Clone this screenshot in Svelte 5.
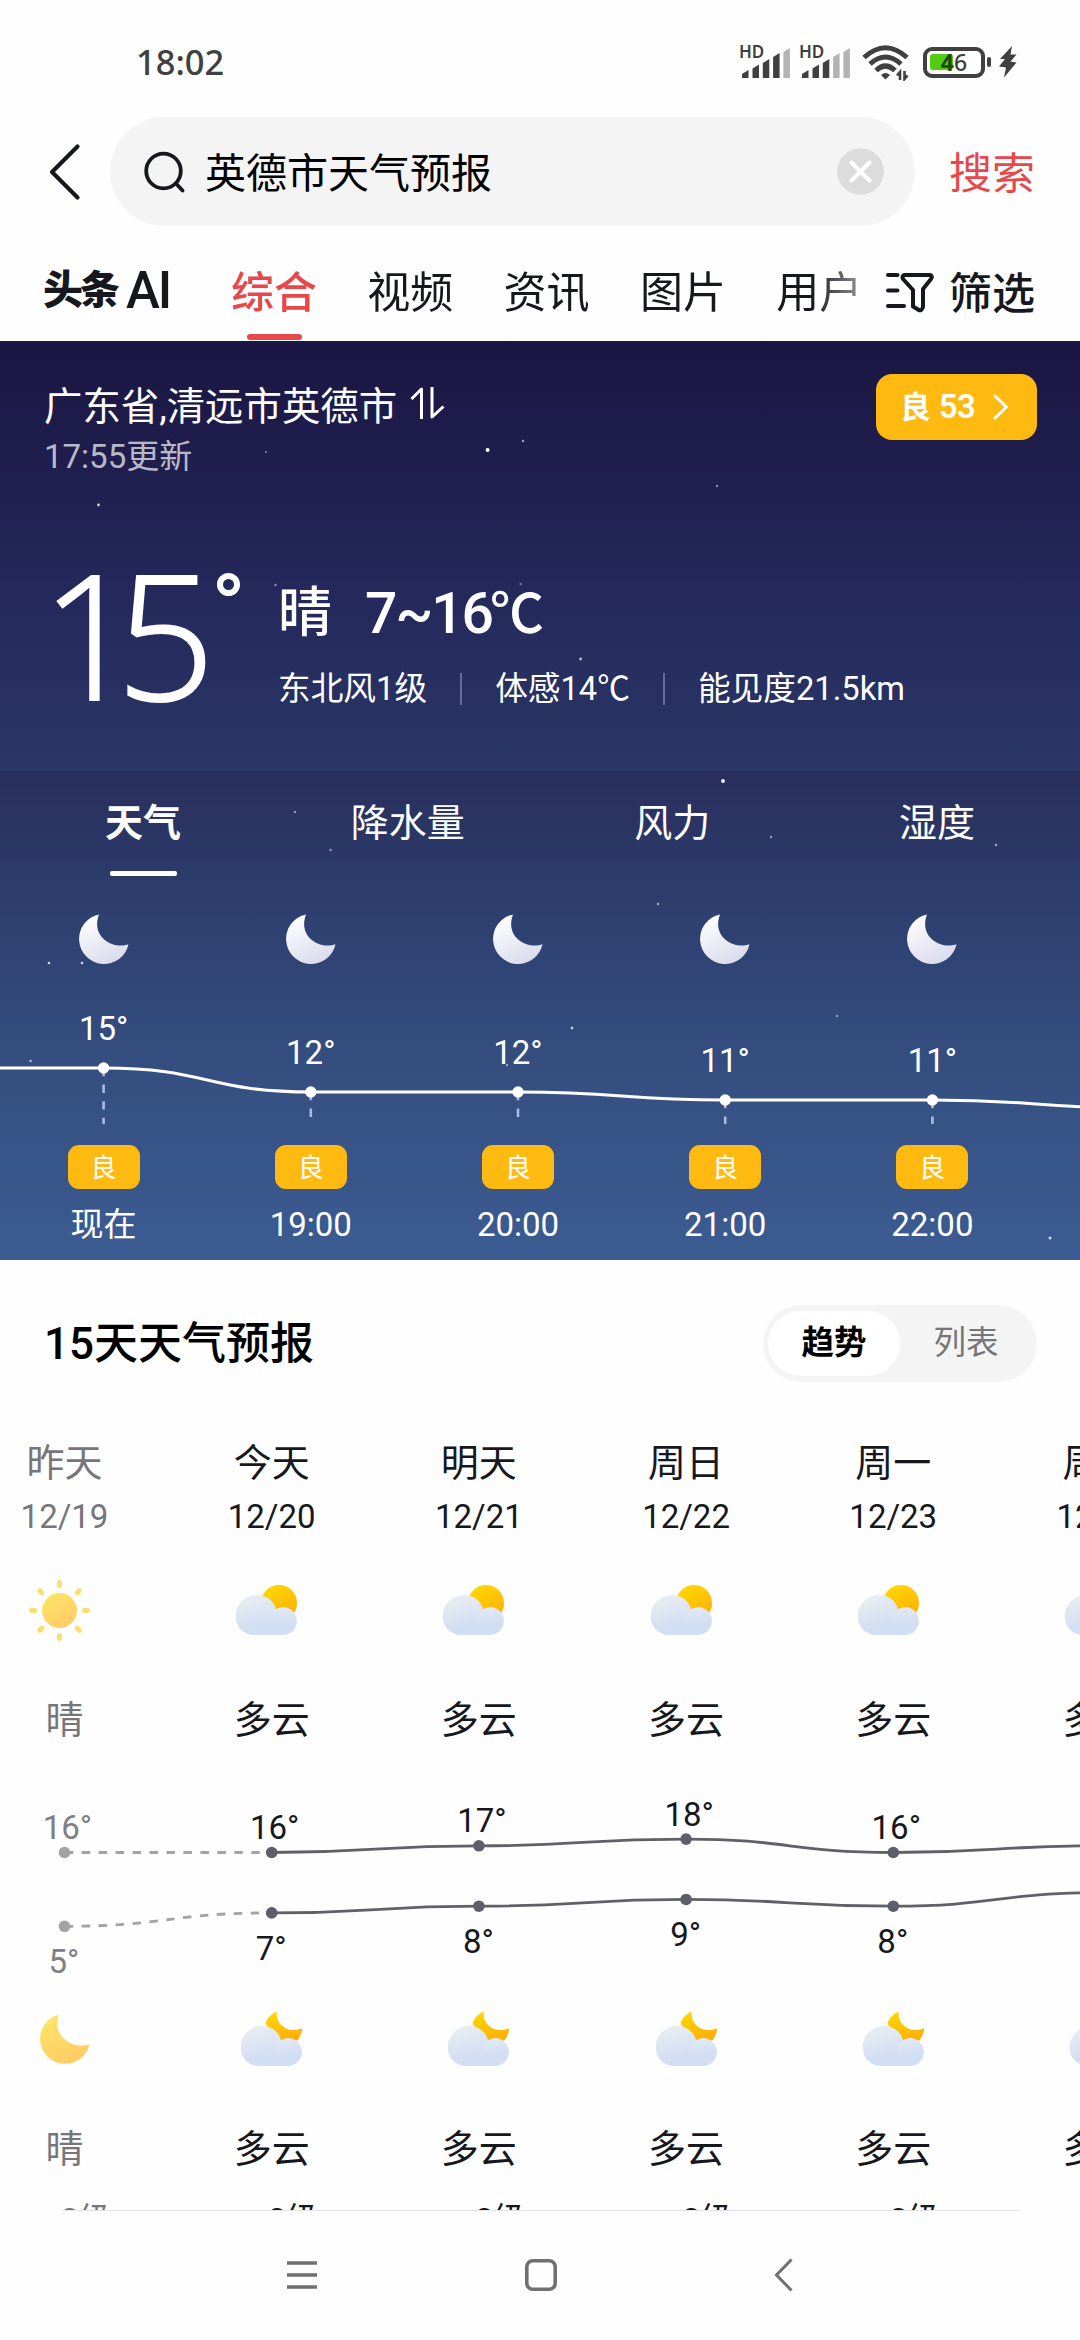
<script>
  const tabs = ['综合', '视频', '资讯', '图片', '用户'];
  const metrics = ['天气', '降水量', '风力', '湿度'];
  let activeTab = '综合';
  let activeMetric = '天气';
  let view = '趋势';

  const COL = 207.2;

  const hours = [
    { time: '现在', temp: 15, air: '良' },
    { time: '19:00', temp: 12, air: '良' },
    { time: '20:00', temp: 12, air: '良' },
    { time: '21:00', temp: 11, air: '良' },
    { time: '22:00', temp: 11, air: '良' },
  ];

  const days = [
    { name: '昨天', date: '12/19', high: 16, low: 5, sky: '晴', past: true },
    { name: '今天', date: '12/20', high: 16, low: 7, sky: '多云' },
    { name: '明天', date: '12/21', high: 17, low: 8, sky: '多云' },
    { name: '周日', date: '12/22', high: 18, low: 9, sky: '多云' },
    { name: '周一', date: '12/23', high: 16, low: 8, sky: '多云' },
    { name: '周二', date: '12/24', high: 17, low: 10, sky: '多云' },
  ];

  // x, y, radius, opacity
  const stars = [
    [487.6, 109, 2, 1], [266, 111, 1, 0.5], [523, 100, 1.2, 0.6], [717, 145, 1.2, 0.5],
    [98.5, 164, 1.4, 0.8], [275.5, 244, 1.2, 0.5], [520.6, 243, 1.2, 0.4], [580.6, 318, 1.4, 0.7],
    [723, 440, 2, 0.9], [295, 471, 1.2, 0.5], [330.6, 509, 1.2, 0.5], [771, 496, 1.2, 0.5],
    [996, 504, 1.2, 0.6], [658, 563, 1.2, 0.6], [49, 622, 1.3, 0.8], [82, 622, 1.3, 0.8],
    [837, 675, 1.2, 0.5], [572, 687, 1.4, 0.7], [30.5, 720, 1.3, 0.6], [507, 724, 1.2, 0.5],
    [1050, 897, 1.5, 0.8],
  ];

  // Smooth line with flat tangents on every point
  const smooth = (pts) =>
    pts.reduce((d, [x, y], i) => {
      if (!i) return `M${x} ${y}`;
      const [px, py] = pts[i - 1];
      const mid = (px + x) / 2;
      return `${d}C${mid} ${py} ${mid} ${y} ${x} ${y}`;
    }, '');

  const hourX = (i) => 103.6 + i * COL;
  const hourY = (t) => 104 + (15 - t) * 8;
  const hourLine = smooth([
    [-103.6, hourY(15)],
    ...hours.map((h, i) => [hourX(i), hourY(h.temp)]),
    [hourX(5), hourY(10)],
  ]);

  const dayX = (i) => 64.5 + i * COL;
  const dayY = (t) => 92.5 - (t - 16) * 6.71;
  const highs = days.map((d, i) => [dayX(i), dayY(d.high)]);
  const lows = days.map((d, i) => [dayX(i), dayY(d.low)]);
</script>

{#snippet cloud()}
  <path d="M20 50C8.500 50 0.800 42 0.800 31.500C0.800 19.500 10 10 22 10C31.500 10 38.500 15.500 41 24L50 50Z" fill="url(#cloud)" />
  <path d="M18 50H48.500A13.600 14 0 1 0 35 33C33 40 30 46 18 50Z" fill="url(#puff)" />
{/snippet}

<svg class="defs" width="0" height="0" aria-hidden="true">
  <defs>
    <linearGradient id="silver" x1="0.2" y1="0" x2="0.7" y2="1">
      <stop offset="0" stop-color="#ffffff" />
      <stop offset="1" stop-color="#d9daec" />
    </linearGradient>
    <linearGradient id="gold" x1="0.2" y1="0" x2="0.7" y2="1">
      <stop offset="0" stop-color="#ffe566" />
      <stop offset="1" stop-color="#ffcb66" />
    </linearGradient>
    <linearGradient id="amber" x1="0.2" y1="0" x2="0.7" y2="1">
      <stop offset="0" stop-color="#ffd800" />
      <stop offset="1" stop-color="#ffae08" />
    </linearGradient>
    <linearGradient id="cloud" x1="0.3" y1="0" x2="0.6" y2="1">
      <stop offset="0" stop-color="#e9eef3" />
      <stop offset="0.75" stop-color="#d2def2" />
    </linearGradient>
    <linearGradient id="puff" x1="0.55" y1="0" x2="0.75" y2="1">
      <stop offset="0" stop-color="#e2eaf7" />
      <stop offset="0.6" stop-color="#d2def2" />
    </linearGradient>
  </defs>
</svg>

<main class="screen">
  <!-- System status bar -->
  <header class="status">
    <span class="clock">18:02</span>
    <div class="indicators">
      {#each [4, 3] as level}
        <div class="signal">
          <span class="hd">HD</span>
          <svg width="50" height="34" viewBox="0 0 50 34" fill="#404040">
            <path d="M1 33V29L7.500 25V33Z" />
            {#each [19.5, 14, 8, 3] as top, i}
              <path d="M{11.5 + i * 10.3} 33V{top + 4}L{18 + i * 10.3} {top}V33Z" fill={i + 2 > level ? '#b3b3b3' : '#404040'} />
            {/each}
          </svg>
        </div>
      {/each}
      <svg class="wifi" width="48" height="36" viewBox="0 0 48 36" fill="none" stroke="#404040" stroke-width="5">
        <path d="M2 12.500Q23.500 -7 45 12.500" />
        <path d="M8 19Q23.500 5 39 19" />
        <path d="M14 25.500Q23.500 16.500 33 25.500" />
        <path d="M19 30Q23.500 26 28 30L23.500 34.500Z" fill="#404040" stroke="none" />
        <path d="M38 35V27L35 30.500M42.500 26V34L45.500 30.500" stroke-width="2.600" />
      </svg>
      <div class="battery"><i></i><b>4</b><span>6</span></div>
      <i class="nub"></i>
      <svg width="18" height="32" viewBox="0 0 18 32" fill="#404040">
        <path d="M13 0L1 13H6L0 20.500L7 21.500L5 31.500L17.500 16.500L11.500 15.500L17.500 8.500H11.500Z" />
      </svg>
    </div>
  </header>

  <!-- Search -->
  <div class="search-row">
    <svg class="back" width="34" height="60" viewBox="0 0 34 60" fill="none" stroke="#16181d" stroke-width="4.200" stroke-linecap="round" stroke-linejoin="round">
      <path d="M30.500 4.500L5 30L30.500 55.500" />
    </svg>
    <div class="search-box">
      <svg width="42" height="42" viewBox="0 0 42 42" fill="none" stroke="#16181d" stroke-width="3.800" stroke-linecap="round">
        <circle cx="19.500" cy="20" r="17.300" />
        <path d="M32 32.500L38.500 39.500" />
      </svg>
      <span class="query">英德市天气预报</span>
      <svg class="clear" width="47" height="47" viewBox="0 0 47 47">
        <circle cx="23.500" cy="23.500" r="23.300" fill="#dcdcdc" />
        <path d="M14.500 14.500L32.500 32.500M32.500 14.500L14.500 32.500" stroke="#fff" stroke-width="4" stroke-linecap="round" />
      </svg>
    </div>
    <span class="search-btn">搜索</span>
  </div>

  <!-- Result tabs -->
  <nav class="tabs">
    <span class="brand">头条<em>AI</em></span>
    <div class="tab-list">
      {#each tabs as tab}
        <span class="tab" class:active={tab === activeTab}>{tab}</span>
      {/each}
    </div>
    <svg class="filter-icon" width="50" height="42" viewBox="0 0 50 42" fill="none" stroke="#16181d" stroke-width="4" stroke-linecap="round" stroke-linejoin="round">
      <path d="M3 4H12.500M3 19.500H12.500M3 35H19" />
      <path d="M19.500 4H45Q48 5 46 8L38 18V36Q36.500 41 33 38.500L28 35.500V19L18 8Q16.500 5 19.500 4Z" />
    </svg>
    <span class="filter">筛选</span>
  </nav>

  <!-- Current weather -->
  <section class="hero">
    <svg class="stars" width="1080" height="919" fill="#fff">
      {#each stars as [x, y, r, o]}
        <circle cx={x} cy={y} {r} opacity={o} />
      {/each}
    </svg>

    <div class="current">
      <div class="place">
        <div>
          <p class="city">
            广东省,清远市英德市
            <svg width="36" height="36" viewBox="0 0 36 36" fill="none" stroke="#fff" stroke-width="3" stroke-linejoin="round">
              <path d="M1.500 14L11.500 4V34M22 2V32L33.500 21.500" />
            </svg>
          </p>
          <p class="updated">17:55更新</p>
        </div>
        <div class="aqi">
          <span>良 <b>53</b></span>
          <svg width="16" height="26" viewBox="0 0 16 26" fill="none" stroke="#fff" stroke-width="3" stroke-linecap="round" stroke-linejoin="round">
            <path d="M2 2L13.500 13L2 24" />
          </svg>
        </div>
      </div>

      <div class="now">
        <div class="big"><span>15</span><i></i></div>
        <div class="facts">
          <p class="range"><span>晴</span><span class="degrees">7~16<em>℃</em></span></p>
          <p class="detail">
            <span>东北风1级</span><i></i><span>体感14℃</span><i></i><span>能见度21.5km</span>
          </p>
        </div>
      </div>
    </div>

    <div class="hourly">
      <div class="metrics">
        {#each metrics as m}
          <span class:active={m === activeMetric}>{m}</span>
        {/each}
      </div>

      <div class="hour-grid moons">
        {#each hours as h (h.time)}
          <svg width="50" height="51" viewBox="0 0 50 51">
            <path d="M20 0.500A25 25 0 1 0 49.500 30.200C34 36 11.500 23 20 0.500Z" fill="url(#silver)" />
          </svg>
        {/each}
      </div>

      <svg class="chart" width="1080" height="181" viewBox="0 0 1080 181">
        {#each hours as h, i}
          <path d="M{hourX(i)} {hourY(h.temp)}V160" stroke="#a9bbe4" stroke-width="2.600" stroke-dasharray="8.300 8.300" />
        {/each}
        <path d={hourLine} fill="none" stroke="#fff" stroke-width="3" />
        {#each hours as h, i}
          <circle cx={hourX(i)} cy={hourY(h.temp)} r="5.700" fill="#fff" />
          <text x={hourX(i)} y={hourY(h.temp) - 28} fill="#fff">{h.temp}°</text>
        {/each}
      </svg>

      <div class="hour-grid">
        {#each hours as h (h.time)}
          <div class="hour">
            <span class="air">{h.air}</span>
            <span class="time">{h.time}</span>
          </div>
        {/each}
      </div>
    </div>
  </section>

  <!-- 15 day forecast -->
  <section class="forecast">
    <div class="forecast-head">
      <h2>15天天气预报</h2>
      <div class="toggle">
        {#each ['趋势', '列表'] as v}
          <span class:on={v === view}>{v}</span>
        {/each}
      </div>
    </div>

    <div class="day-grid">
      {#each days as d (d.date)}
        <div class="day" class:past={d.past}>
          <span class="name">{d.name}</span>
          <span class="date">{d.date}</span>
          <div class="icon">
            {#if d.sky === '晴'}
              <svg width="63" height="63" viewBox="-31.500 -31.500 63 63">
                <circle r="17.500" fill="url(#gold)" />
                {#each [0, 45, 90, 135, 180, 225, 270, 315] as a}
                  <path d="M0 -28V-25" stroke="#f9de72" stroke-width="5" stroke-linecap="round" transform="rotate({a})" />
                {/each}
              </svg>
            {:else}
              <svg width="63" height="51" viewBox="0 0 63 51">
                <circle cx="44" cy="18" r="18" fill="url(#amber)" />
                {@render cloud()}
              </svg>
            {/if}
          </div>
          <span class="sky">{d.sky}</span>
        </div>
      {/each}
    </div>

    <svg class="chart" width="1080" height="220" viewBox="0 0 1080 220">
      {#each [highs, lows] as line}
        <path d={smooth(line.slice(0, 2))} fill="none" stroke="#a3a3a6" stroke-width="2.800" stroke-dasharray="8.500 8.500" />
        <path d={smooth(line.slice(1))} fill="none" stroke="#606066" stroke-width="2.800" />
        {#each line as [x, y], i}
          <circle cx={x} cy={y} r="5.800" fill={days[i].past ? '#a3a3a6' : '#5d5e6b'} />
        {/each}
      {/each}
      {#each days.slice(0, 5) as d, i}
        <text x={dayX(i) + 3} y={dayY(d.high) - 13.5} fill={d.past ? '#808084' : '#16181d'}>{d.high}°</text>
        <text x={dayX(i) - 0.5} y={dayY(d.low) + 47} fill={d.past ? '#808084' : '#16181d'}>{d.low}°</text>
      {/each}
    </svg>

    <div class="day-grid">
      {#each days as d (d.date)}
        <div class="day" class:past={d.past}>
          <div class="icon night">
            {#if d.sky === '晴'}
              <svg width="50" height="51" viewBox="0 0 50 51">
                <path d="M19 0.500A25 25 0 1 0 49.500 30.200C34 36 11 23 19 0.500Z" fill="url(#gold)" />
              </svg>
            {:else}
              <svg width="63" height="56" viewBox="0 -5 63 56">
                <path d="M36.700 -4.500C31 -2 27 2 25.500 8L40 24L57.500 24.500C60 21 62 16 62.300 12C50 18 35 10 36.700 -4.500Z" fill="url(#amber)" />
                {@render cloud()}
              </svg>
            {/if}
          </div>
          <span class="sky">{d.sky}</span>
          <span class="wind">3级</span>
        </div>
      {/each}
    </div>
  </section>

  <!-- System navigation -->
  <footer class="sysnav">
    <svg width="32" height="34" viewBox="0 0 32 34" fill="none" stroke="#707070" stroke-width="3.600">
      <path d="M1 5H31M1 17H31M1 29H31" />
    </svg>
    <svg width="34" height="34" viewBox="0 0 34 34" fill="none" stroke="#707070" stroke-width="3.600">
      <rect x="2.800" y="2.800" width="28.400" height="28.400" rx="6" />
    </svg>
    <svg class="nav-back" width="20" height="34" viewBox="0 0 20 34" fill="none" stroke="#707070" stroke-width="3">
      <path d="M17.500 1.500L2.500 17L17.500 32.500" />
    </svg>
  </footer>
</main>

<style>
  :global(body) {
    margin: 0;
    background: #fff;
  }

  .defs { position: absolute; }

  .screen {
    width: 1080px;
    height: 2340px;
    overflow: hidden;
    background: #fefefe;
    color: #16181d;
    font-family: Roboto, 'Noto Sans CJK SC', sans-serif;
  }
  .screen svg { display: block; flex: none; }
  p, h2 { margin: 0; }

  /* ===== Status bar ===== */
  .status {
    box-sizing: border-box;
    height: 117px;
    padding: 7px 63px 0 136px;
    display: flex;
    justify-content: space-between;
    align-items: center;
  }
  .clock {
    font: 500 34.500px/40px 'Noto Sans', sans-serif;
    color: #404040;
  }
  .indicators { display: flex; align-items: center; }
  .signal { position: relative; width: 60px; }
  .hd {
    position: absolute;
    left: -2px;
    top: -1px;
    font: 600 17px/16px 'Noto Sans', sans-serif;
    color: #404040;
  }
  .wifi { margin: 2px 0 0 1px; }
  .battery {
    box-sizing: border-box;
    position: relative;
    width: 62px;
    height: 31px;
    margin-left: 13px;
    border: 4.5px solid #404040;
    border-radius: 9px;
    display: flex;
    justify-content: center;
    align-items: center;
    font: 500 23px/22px 'Noto Sans', sans-serif;
    color: #404040;
  }
  .battery i {
    position: absolute;
    left: 2.500px;
    top: 3px;
    width: 23px;
    height: 16px;
    border-radius: 3px;
    background: #52cc14;
  }
  .battery b { position: relative; color: #1d4a08; font-weight: 700; }
  .battery span { position: relative; }
  .nub {
    width: 4px;
    height: 10px;
    margin: 0 8px 0 2px;
    border-radius: 2px;
    background: #404040;
  }

  /* ===== Search ===== */
  .search-row {
    height: 109px;
    display: flex;
    align-items: center;
  }
  .back { margin: 0 29px 0 47px; }
  .search-box {
    box-sizing: border-box;
    width: 805px;
    height: 109px;
    padding: 0 31.500px 0 34px;
    border-radius: 55px;
    background: #f4f4f4;
    display: flex;
    align-items: center;
  }
  .query {
    flex: 1;
    margin: 0 0 4px 19px;
    font-size: 41px;
    color: #000;
  }
  .search-btn {
    margin: 0 0 4px 34px;
    font-size: 43px;
    color: #e8474b;
  }

  /* ===== Tabs ===== */
  .tabs {
    box-sizing: border-box;
    height: 115px;
    padding: 16px 0 0 43px;
    display: flex;
    align-items: center;
  }
  .brand {
    width: 188px;
    padding-bottom: 2px;
    display: flex;
    align-items: center;
    font-size: 40px;
    font-weight: 900;
    line-height: 60px;
    letter-spacing: -3px;
  }
  .brand em {
    margin-left: 9px;
    font: 500 51px/60px Roboto, sans-serif;
    letter-spacing: -2px;
  }
  .tab-list {
    width: 630px;
    overflow: hidden;
    display: flex;
    gap: 50.300px;
    align-self: stretch;
    mask-image: linear-gradient(90deg, #000 580px, transparent 675px);
  }
  .tab {
    position: relative;
    flex: none;
    width: 86px;
    font-size: 43px;
    line-height: 102px;
    height: 99px;
  }
  .tab.active { color: #e8474b; font-weight: 500; }
  .tab.active::after {
    content: '';
    position: absolute;
    left: 16px;
    bottom: 1px;
    width: 55px;
    height: 6px;
    border-radius: 3px;
    background: #e8474b;
  }
  .filter-icon { margin: 0 14px 0 24px; }
  .filter {
    margin-bottom: 4px;
    font-size: 43px;
    font-weight: 500;
  }

  /* ===== Hero ===== */
  .hero {
    position: relative;
    height: 919px;
    color: #fff;
  }
  .stars { position: absolute; left: 0; top: 0; }
  .current {
    box-sizing: border-box;
    height: 430px;
    padding: 33px 43px 0 44px;
    background: linear-gradient(#1b1643, #202050 35%, #24275a 55%, #2a3766);
  }
  .place { display: flex; justify-content: space-between; }
  .city {
    display: flex;
    align-items: center;
    gap: 13px;
    height: 57px;
    margin-bottom: 3px;
    font-size: 38.400px;
  }
  .updated {
    font-size: 33px;
    line-height: 45px;
    color: rgba(255, 255, 255, 0.7);
  }
  .aqi {
    box-sizing: border-box;
    width: 161px;
    height: 66px;
    padding: 0 28px 0 24px;
    border-radius: 16px;
    background: #ffba12;
    display: flex;
    justify-content: space-between;
    align-items: center;
    font-size: 31px;
    font-weight: 700;
  }
  .aqi span { margin-bottom: 6px; }
  .aqi b { font-size: 33px; font-weight: 600; letter-spacing: -0.500px; }
  .now { display: flex; margin-top: 97px; }
  .big {
    width: 234px;
    display: flex;
  }
  .big span {
    width: 176px;
    margin-left: -3px;
    font: 300 173px/115px 'Open Sans', sans-serif;
    letter-spacing: -23.500px;
    -webkit-text-stroke: 2px #fff;
  }
  .big i {
    box-sizing: border-box;
    width: 23px;
    height: 23px;
    border: 6px solid #fff;
    border-radius: 50%;
    margin-top: -3px;
  }
  .range {
    display: flex;
    gap: 33px;
    font-size: 54px;
    font-weight: 500;
    line-height: 76px;
    height: 70px;
  }
  .degrees { font-size: 57px; letter-spacing: -2px; }
  .degrees em {
    font: 500 54px/60px 'Noto Sans CJK SC', sans-serif;
    letter-spacing: 0;
    margin-left: -2px;
  }
  .detail {
    display: flex;
    align-items: center;
    margin-top: 18px;
    font-size: 32.700px;
    line-height: 50px;
  }
  .detail i {
    width: 2px;
    height: 32px;
    margin: 0 33px;
    background: rgba(255, 255, 255, 0.3);
  }

  /* ===== Hourly ===== */
  .hourly {
    height: 489px;
    background: linear-gradient(#292e5c, #2e4272 33%, #354e80 60%, #3c5c92);
  }
  .metrics {
    display: grid;
    grid-template-columns: repeat(4, 264.700px);
    justify-content: center;
    height: 107px;
    font-size: 38px;
    line-height: 104px;
    text-align: center;
  }
  .metrics span { position: relative; }
  .metrics .active { font-weight: 700; }
  .metrics .active::after {
    content: '';
    position: absolute;
    left: 99px;
    top: 100px;
    width: 67px;
    height: 5px;
    border-radius: 2px;
    background: #fff;
  }
  .hour-grid {
    display: grid;
    grid-template-columns: repeat(5, 207.200px);
    justify-items: center;
  }
  .moons { height: 50px; padding-top: 36px; }
  .chart text {
    font-size: 33px;
    text-anchor: middle;
  }
  .hour {
    display: flex;
    flex-direction: column;
    align-items: center;
  }
  .air {
    width: 72px;
    height: 44px;
    border-radius: 11px;
    background: #ffba12;
    font-size: 26px;
    line-height: 46px;
    text-align: center;
  }
  .time {
    margin-top: 12px;
    font-size: 33px;
    line-height: 48px;
  }

  /* ===== Forecast ===== */
  .forecast {
    box-sizing: border-box;
    height: 950px;
    padding-top: 45px;
    overflow: hidden;
  }
  .forecast-head {
    height: 77px;
    padding: 0 43px 0 44px;
    display: flex;
    justify-content: space-between;
    align-items: center;
    margin-bottom: 51px;
  }
  h2 {
    margin-bottom: 8px;
    font-size: 44px;
    font-weight: 500;
    color: #000;
  }
  .toggle {
    box-sizing: border-box;
    width: 274px;
    height: 77px;
    padding: 6px 5px;
    border-radius: 39px;
    background: #f4f4f4;
    display: grid;
    grid-template-columns: 1fr 1fr;
    font-size: 32.500px;
    line-height: 65px;
    text-align: center;
    color: #76767a;
  }
  .toggle .on {
    border-radius: 33px;
    background: #fff;
    color: #000;
    font-weight: 700;
  }
  .day-grid {
    display: grid;
    grid-template-columns: repeat(6, 207.200px);
    margin-left: -39.100px;
  }
  .day {
    display: flex;
    flex-direction: column;
    align-items: center;
  }
  .past { color: #76767a; }
  .name { font-size: 38px; line-height: 60px; }
  .date { font-size: 33px; line-height: 48px; }
  .icon {
    height: 139px;
    padding-right: 10px;
    display: flex;
    align-items: center;
  }
  .sky { height: 80px; font-size: 38px; line-height: 81px; }
  .icon.night { height: 118px; padding-right: 0; }
  .night + .sky { height: 102px; line-height: 103px; }
  .wind {
    padding-left: 43px;
    font-size: 32px;
    line-height: 39px;
  }

  /* ===== System nav ===== */
  .sysnav {
    height: 130px;
    display: flex;
    justify-content: center;
    align-items: center;
    gap: 206px;
    background:
      linear-gradient(#e4e4e4, #e4e4e4) 62px 0 / 958px 1px no-repeat;
  }
  .nav-back { margin-left: 10px; }
</style>
